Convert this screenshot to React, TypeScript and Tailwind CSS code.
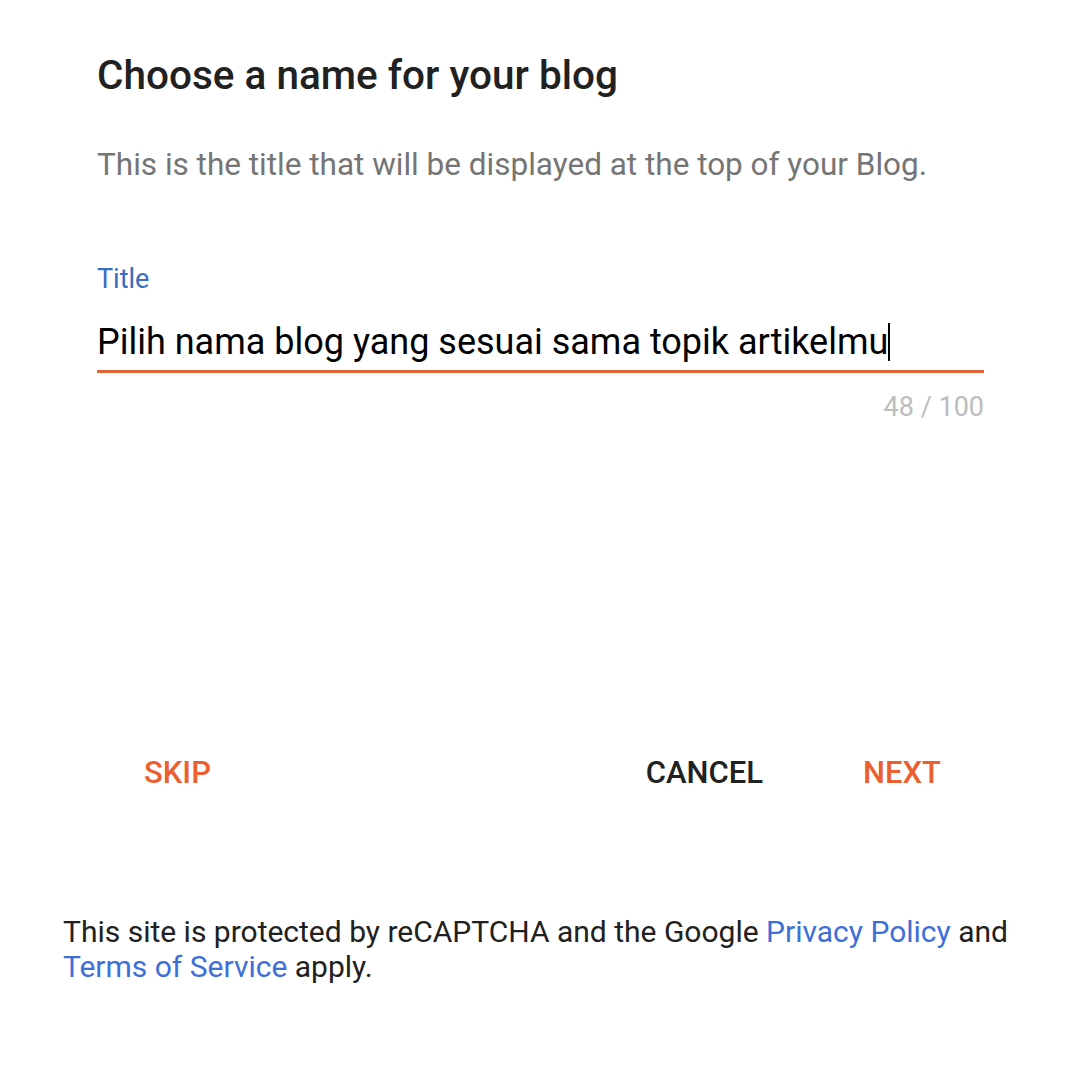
export default function App() {
  return (
    <div className="w-[1080px] h-[1080px] bg-white relative" style={{ fontFamily: "Roboto, sans-serif" }}>
      <div className="pl-[97px] pr-[96px] pt-[51px]">
        <h1 className="text-[40.5px] leading-[48px] font-medium text-[#212121] whitespace-nowrap">Choose a name for your blog</h1>
        <p className="mt-[47px] text-[31.5px] leading-[38px] text-[#757575] whitespace-nowrap">This is the title that will be displayed at the top of your Blog.</p>
        <div className="mt-[79px] text-[27px] leading-[32px] text-[#3b6cc4]">Title</div>
        <div className="mt-[25px] text-[36px] leading-[44px] text-black flex items-center whitespace-nowrap">
          <span>Pilih nama blog yang sesuai sama topik artikelmu</span>
          <span className="w-[2px] h-[38px] bg-black"></span>
        </div>
        <div className="mt-[6px] h-[3px] bg-[#e4643a]"></div>
        <div className="mt-[18px] text-right text-[27px] leading-[32px] text-[#bdbdbd]">48 / 100</div>
      </div>
      <div className="mt-[332px] flex items-center pl-[144px] pr-[139px] text-[31px] leading-[36px] font-medium">
        <span className="text-[#ec5f2e]">SKIP</span>
        <span className="ml-auto text-[#212121]">CANCEL</span>
        <span className="ml-[100px] text-[#ec5f2e]">NEXT</span>
      </div>
      <p className="mt-[123px] pl-[63px] pr-[40px] text-[30px] leading-[35px] text-[#212121]">
        This site is protected by reCAPTCHA and the Google <span className="text-[#3e6fd8]">Privacy Policy</span> and <br /><span className="text-[#3e6fd8]">Terms of Service</span> apply.
      </p>
    </div>
  );
}
